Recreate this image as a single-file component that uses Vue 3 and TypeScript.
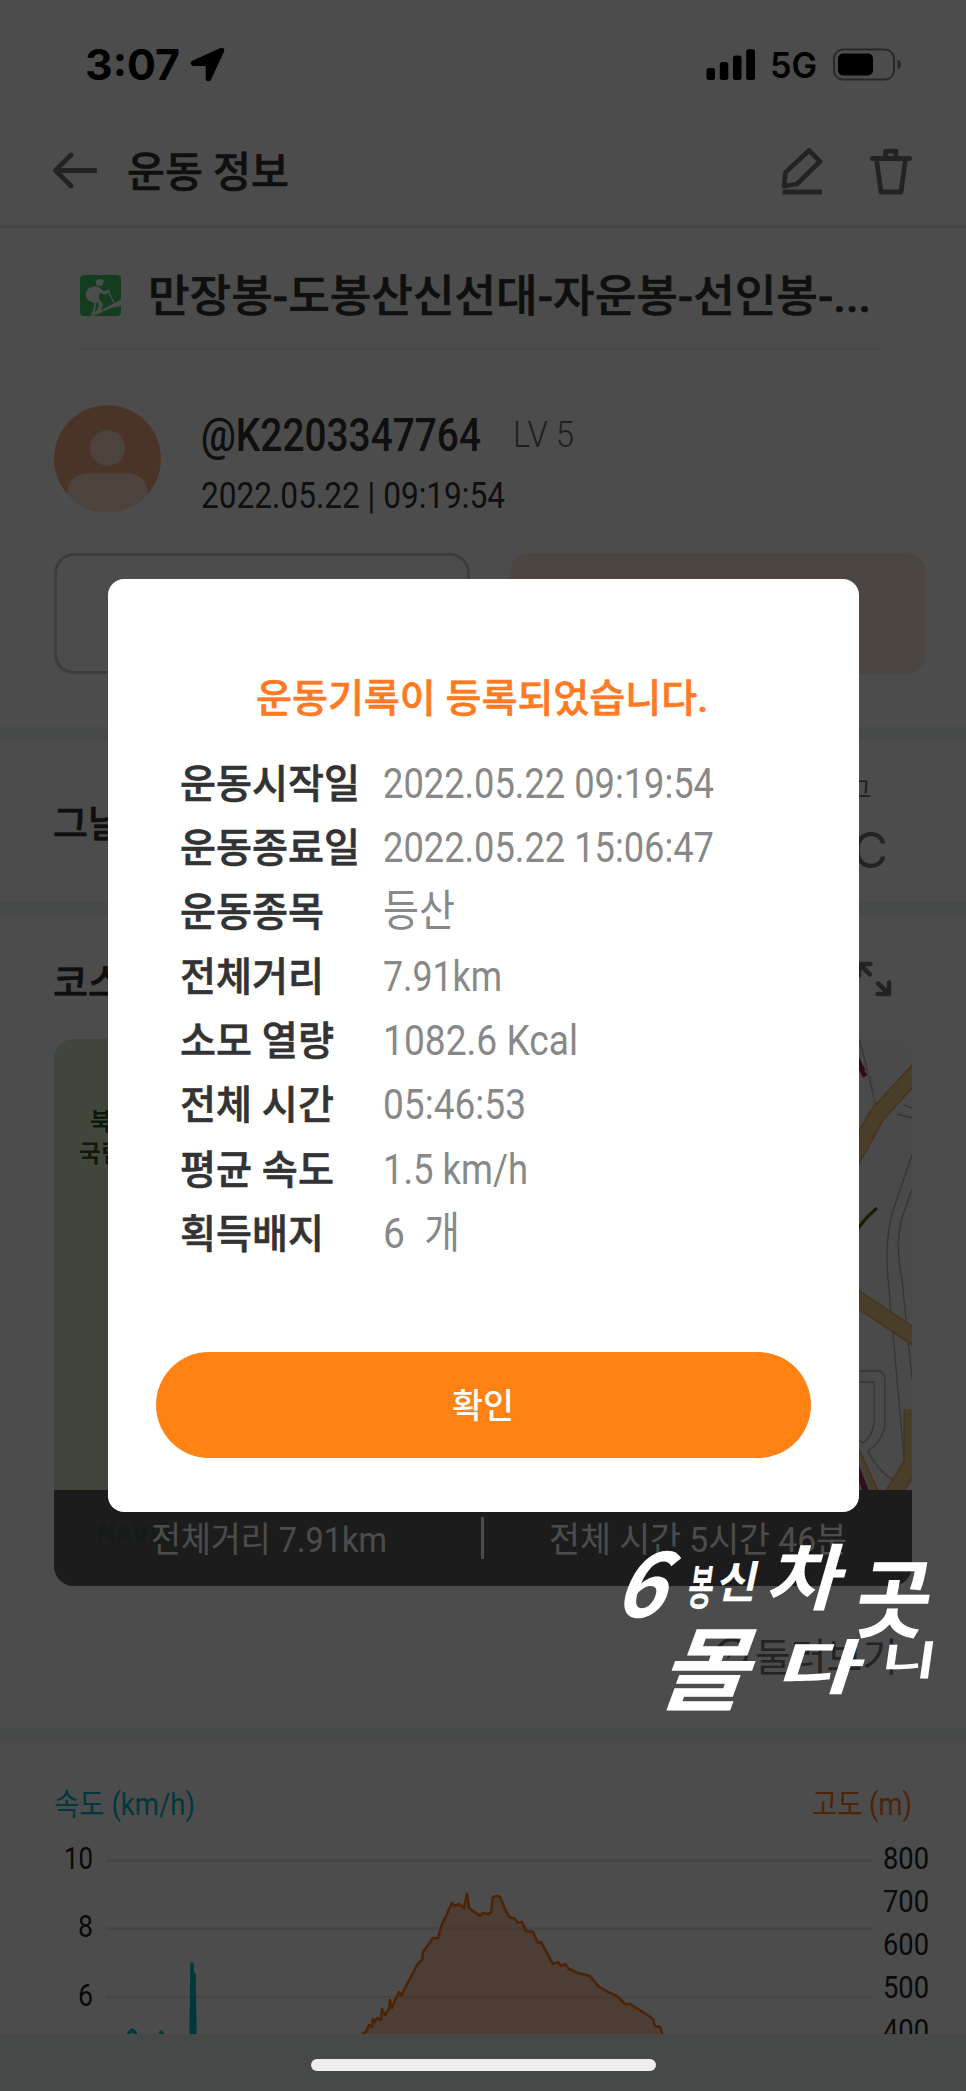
<script setup lang="ts">
interface Row {
  label: string
  labelWidth: number
  value: string
  valueWidth: number
}

interface Tick {
  value: number
  width: number
}

interface BrushGlyph {
  char: string
  transform: string
}

// Squeezes a run of text horizontally to the given width in pixels.
const vFit = {
  mounted(el: HTMLElement, binding: { value: number }) {
    const natural = el.getBoundingClientRect().width
    if (!natural) return
    el.style.transform = `scaleX(${binding.value / natural})`
    el.style.marginRight = `${binding.value - natural}px`
  },
}

const rows: Row[] = [
  { label: '운동시작일', labelWidth: 180, value: '2022.05.22 09:19:54', valueWidth: 331 },
  { label: '운동종료일', labelWidth: 180, value: '2022.05.22 15:06:47', valueWidth: 331 },
  { label: '운동종목', labelWidth: 144, value: '등산', valueWidth: 72 },
  { label: '전체거리', labelWidth: 144, value: '7.91km', valueWidth: 119 },
  { label: '소모 열량', labelWidth: 154, value: '1082.6 Kcal', valueWidth: 195 },
  { label: '전체 시간', labelWidth: 154, value: '05:46:53', valueWidth: 143 },
  { label: '평균 속도', labelWidth: 154, value: '1.5 km/h', valueWidth: 145 },
  { label: '획득배지', labelWidth: 144, value: '6\u00a0 개', valueWidth: 77 },
]

const speedTicks: Tick[] = [
  { value: 10, width: 29 },
  { value: 8, width: 15 },
  { value: 6, width: 15 },
]
const altitudeTicks = [800, 700, 600, 500, 400]

const brush: BrushGlyph[] = [
  { char: '6', transform: 'translate(6 97) skewX(-22) scale(.88 .94)' },
  { char: '봉', transform: 'translate(80 85) skewX(-8) scale(.29 .5)' },
  { char: '신', transform: 'translate(109 78) skewX(-12) scale(.46 .46)' },
  { char: '차', transform: 'translate(158 84) skewX(-16) scale(.84 .75)' },
  { char: '곳', transform: 'translate(245 111) skewX(-10) scale(.86 .9)' },
  { char: '몰', transform: 'translate(50 183) skewX(-20) scale(1 .95)' },
  { char: '다', transform: 'translate(168 169) skewX(-18) scale(.94 .62)' },
  { char: '니', transform: 'translate(274 155) skewX(-8) scale(.62 .42)' },
]
</script>

<template>
  <div class="phone">
    <div class="page">
      <div class="status">
        <div class="status-left">
          <span v-fit="95" class="time fit">3:07</span>
          <svg class="loc" width="38" height="38" viewBox="0 0 38 38">
            <path d="M32.5 4.500 4.500 17.200H19.500V32.500Z" fill="#000" stroke="#000" stroke-width="5.500" stroke-linejoin="round" />
          </svg>
        </div>
        <div class="status-right">
          <svg width="50" height="34" viewBox="0 0 50 34">
            <rect x="0.500" y="20" width="8.500" height="12" rx="2.500" />
            <rect x="13.800" y="14" width="8.500" height="18" rx="2.500" />
            <rect x="27" y="7.500" width="8.500" height="24.500" rx="2.500" />
            <rect x="40.200" y="1.200" width="8.800" height="30.800" rx="2.500" />
          </svg>
          <span v-fit="47" class="net fit">5G</span>
          <svg class="battery" width="70" height="34" viewBox="0 0 70 34">
            <rect x="1" y="1.500" width="60" height="30" rx="9" fill="none" stroke="#858585" stroke-width="2" />
            <rect x="5" y="5.500" width="35" height="22" rx="5" />
            <path d="M64.500 11.500q3.500 1.500 3.500 5t-3.500 5z" fill="#858585" />
          </svg>
        </div>
      </div>

      <header class="header">
        <svg width="48" height="40" viewBox="0 0 48 40" class="line-icon">
          <path d="M20 4 4.500 19.500 20 35M5 19.500H46" fill="none" stroke-width="5" stroke-linejoin="round" />
          <circle cx="20" cy="4" r="2.500" /><circle cx="20" cy="35" r="2.500" />
        </svg>
        <h1><span v-fit="162" class="fit">운동 정보</span></h1>
        <div class="tools">
          <svg width="44" height="50" viewBox="0 0 44 50" class="line-icon">
            <path d="M29 4.500 40 15.500 17 38 4 40 5.500 26.500ZM2.500 46H42" fill="none" stroke-width="4.800" stroke-linejoin="round" />
          </svg>
          <svg width="44" height="50" viewBox="0 0 44 50" class="line-icon">
            <path d="M3.500 12.500H40.500" stroke-width="5" stroke-linecap="round" />
            <path d="M7.500 13 12 46H32L36.500 13M16.500 12V5.200H27V12" fill="none" stroke-width="4.800" stroke-linejoin="round" />
          </svg>
        </div>
      </header>

      <div class="route">
        <svg width="41" height="41" viewBox="0 0 41 41">
          <rect width="41" height="41" rx="4" fill="#45c968" />
          <circle cx="19.500" cy="7.500" r="3.600" fill="#fff" />
          <path d="M20 4.500 24.500 5.500 23 7Z" fill="#fff" />
          <path d="M6 18Q7 13 12 12Q17 10.500 19 12.500L24 16.500 29 14.500 30.200 16.500 25 19.500 19.500 18 19 24 23 29 21 36 11 40 13 35 14.500 28 8.500 25.500Q5 22 6 18Z" fill="#fff" />
          <path d="M17 26 19 30 16.500 36 14.500 37 16 31Z" fill="#45c968" />
          <path d="M28 15.500 34 28" stroke="#fff" stroke-width="1.300" />
          <path d="M10.500 41 41 24.500V31Q28 33 19 38.500L13 41Z" fill="#fff" />
        </svg>
        <h2><span v-fit="723" class="fit">만장봉-도봉산신선대-자운봉-선인봉-...</span></h2>
      </div>

      <div class="profile">
        <svg width="108" height="108" viewBox="0 0 108 108">
          <defs><clipPath id="face"><circle cx="53.500" cy="53.700" r="53.500" /></clipPath></defs>
          <g clip-path="url(#face)">
            <rect width="108" height="108" fill="#f9b088" />
            <circle cx="53.500" cy="43" r="17.600" fill="#fde0c9" />
            <rect x="13" y="68.500" width="81" height="60" rx="20" fill="#fde0c9" />
          </g>
        </svg>
        <div class="who">
          <div class="name-line">
            <span v-fit="280" class="name fit">@K2203347764</span>
            <span v-fit="61" class="level fit">LV 5</span>
          </div>
          <span v-fit="304" class="date fit">2022.05.22 | 09:19:54</span>
        </div>
      </div>

      <div class="actions">
        <div class="action outline"></div>
        <div class="action tint"></div>
      </div>

      <div class="band"></div>

      <section class="weather">
        <h3>그날의 날씨</h3>
        <div class="temp">
          <span class="temp-label">그</span>
          <span class="temp-value">°C</span>
        </div>
      </section>

      <div class="band"></div>

      <section class="course">
        <h3>코스</h3>
        <svg width="40" height="40" viewBox="0 0 40 40">
          <path d="M17.500 6H6V17.500M6.500 6.500 17 16.500M36 24.500V36H24.500M35.500 35.500 25 25.500" fill="none" stroke="#777" stroke-width="4.500" stroke-linecap="round" stroke-linejoin="round" />
        </svg>
      </section>

      <div class="map">
        <svg class="map-art" width="858" height="547" viewBox="0 0 858 547">
          <rect width="858" height="547" fill="#f7f7f7" />
          <path d="M0 0H420V547H0Z" fill="#d8e9c8" />
          <g fill="none" stroke="#b0b0b0" stroke-width="1.300">
            <path d="M805 0 811 22 823 72M850 66 858 69M843 75 858 79" />
            <path d="M858 116 838 175Q830 205 835 250L847 385 851 430V442H840Q822 430 814 412 826 405 831 388V340Q830 332 823 332H800" />
            <path d="M858 150 847 182Q841 210 848 240L858 340M800 343H820V385Q817 399 809 404L800 398" />
          </g>
          <path d="M803 192Q807 183 823 169" fill="none" stroke="#456600" stroke-width="3" />
          <path d="M800 14Q807 30 812 37M816 76Q817 90 803 106" fill="none" stroke="#9b2850" stroke-width="6" />
          <path d="M811 31Q824 45 818 78Q815 92 803 111" fill="none" stroke="#e0e0e0" stroke-width="2" />
          <g fill="none" stroke="#f4a060" stroke-width="17" stroke-linejoin="round">
            <path d="M790 136 823 76 875 19M790 251 875 308M858 370V424L825 478M790 397 826 474 815 490" />
          </g>
          <g fill="none" stroke="#f5cf88" stroke-width="14.500" stroke-linejoin="round">
            <path d="M790 136 823 76 875 19M790 251 875 308M858 370V424L825 478M790 397 826 474 815 490" />
          </g>
          <path d="M798 417 815 460 808 547" fill="none" stroke="#ddd" stroke-width="12" />
          <path d="M798 417 815 460 808 547" fill="none" stroke="#b03060" stroke-width="6" />
        </svg>
        <div class="park">북한산<br />국립공원</div>
        <div class="summary">
          <span class="naver">NAVER</span>
          <div class="sum-cell first"><span v-fit="236" class="fit">전체거리 7.91km</span></div>
          <i></i>
          <div class="sum-cell"><span v-fit="298" class="fit">전체 시간 5시간 46분</span></div>
        </div>
      </div>

      <div class="look">
        <svg width="34" height="34" viewBox="0 0 34 34">
          <circle cx="17" cy="17" r="14.500" fill="none" stroke="#777" stroke-width="3.500" />
          <path d="m21 11-5 8-5 4 5-9z" fill="#777" />
        </svg>
        <span v-fit="143" class="fit">둘러보기</span>
      </div>

      <div class="band"></div>

      <section class="chart">
        <div class="legend">
          <span v-fit="141" class="speed fit">속도 (km/h)</span>
          <div class="alt-box"><span v-fit="100" class="alt fit">고도 (m)</span></div>
        </div>
        <div class="plot">
          <div class="ticks speed-ticks">
            <span v-for="t in speedTicks" :key="t.value"><b v-fit="t.width" class="fit">{{ t.value }}</b></span>
          </div>
          <svg width="766" height="200" viewBox="0 0 766 200">
            <path d="M0 26.500H766M0 94.500H766M0 163H766" stroke="#e6e6e6" stroke-width="2.500" />
            <path d="M256 200 260 198 263 191 266 193 267 185 269 188 271 184 275 186 276 175 279 181 283 175 284 166 286 174 288 168 293 158 295 162 299 154 307 139 311 131 316 126 317 118 327 104 332 104 336 90 346 69 349 70 353 70 358 72 361 57 363 74 370 79 374 80 377 79 383 80 385 78 387 63 391 62 394 63 399 75 403 83 409 87 412 91 416 91 420 97 427 100 432 109 435 108 440 117 447 130 452 130 455 132 459 130 463 135 472 139 484 142 492 152 502 158 511 162 519 170 524 170 537 178 547 185 549 192 554 193 557 202H256Z" fill="#ff7a22" fill-opacity=".36" />
            <path d="M256 200 260 198 263 191 266 193 267 185 269 188 271 184 275 186 276 175 279 181 283 175 284 166 286 174 288 168 293 158 295 162 299 154 307 139 311 131 316 126 317 118 327 104 332 104 336 90 341 80 346 69 349 72 353 70 358 74 361 60 363 74 370 79 374 82 377 79 383 80 385 78 387 63 391 62 394 63 399 75 403 83 409 85 412 89 416 88 420 97 427 98 432 109 435 108 440 117 447 130 452 128 455 132 459 130 463 135 472 139 484 142 492 152 502 158 511 162 519 170 524 170 537 178 547 185 549 192 554 193 557 202" fill="none" stroke="#ff7518" stroke-width="2.600" stroke-linejoin="round" />
            <path d="M22 200 26 196 29 198 30 202M54 200 55 198 57 201M85 202 86 130 88 202 88 140 89 202" fill="none" stroke="#00bdc4" stroke-width="3.400" stroke-linejoin="round" />
          </svg>
          <div class="ticks alt-ticks">
            <span v-for="t in altitudeTicks" :key="t"><b v-fit="46" class="fit">{{ t }}</b></span>
          </div>
        </div>
      </section>

      <footer class="footer"></footer>
    </div>

    <div class="dim">
      <div class="modal">
        <p class="modal-title"><span v-fit="452" class="fit">운동기록이 등록되었습니다.</span></p>
        <dl>
          <div v-for="row in rows" :key="row.label" class="row">
            <dt><span v-fit="row.labelWidth" class="fit">{{ row.label }}</span></dt>
            <dd><span v-fit="row.valueWidth" class="fit">{{ row.value }}</span></dd>
          </div>
        </dl>
        <button type="button"><span v-fit="62" class="fit">확인</span></button>
      </div>
    </div>

    <svg class="handwriting" width="340" height="200" viewBox="0 0 340 200">
      <text v-for="g in brush" :key="g.char" :transform="g.transform">{{ g.char }}</text>
    </svg>
    <div class="home"></div>
  </div>
</template>

<style>
body {
  margin: 0;
  background: #4c4c4c;
}
</style>

<style scoped>
.phone {
  position: relative;
  width: 966px;
  height: 2091px;
  overflow: hidden;
  font-family: Roboto, 'Noto Sans CJK KR', sans-serif;
}
h1,
h2,
h3,
p,
dl,
dd {
  margin: 0;
}
svg {
  flex: none;
}
.fit {
  display: inline-block;
  white-space: pre;
  transform-origin: 0 50%;
}
.page {
  display: flex;
  flex-direction: column;
  height: 2091px;
  background: #fff;
  color: #333;
}
.status {
  box-sizing: border-box;
  display: flex;
  justify-content: space-between;
  height: 110px;
  padding: 45px 63px 0 85px;
  font-family: Inter, sans-serif;
  color: #000;
}
.status-left,
.status-right {
  display: flex;
  align-items: center;
  height: 40px;
}
.time {
  font-size: 42px;
  font-weight: 700;
  line-height: 40px;
}
.loc {
  margin-left: 9px;
}
.net {
  margin-left: 14px;
  font-size: 35px;
  font-weight: 600;
  line-height: 40px;
}
.battery {
  margin-left: 16px;
}
.header {
  box-sizing: border-box;
  display: flex;
  align-items: center;
  height: 118px;
  padding: 7px 53px 0 51px;
  border-bottom: 3px solid #e6e6e6;
}
.line-icon {
  stroke: #777;
  color: #777;
}
.line-icon circle {
  fill: #777;
  stroke: none;
}
.header h1 {
  margin-left: 28px;
  padding-top: 3px;
  font-size: 42px;
  font-weight: 500;
  line-height: 60px;
}
h1,
h2,
h3,
dt,
.modal-title {
  -webkit-text-stroke: 0.6px currentColor;
}
.tools {
  display: flex;
  gap: 45px;
  margin-left: auto;
}
.route {
  box-sizing: border-box;
  display: flex;
  align-items: center;
  height: 122px;
  margin: 0 81px 0 80px;
  padding-top: 14px;
  border-bottom: 2px solid #eff5f4;
}
.route h2 {
  width: 724px;
  margin-left: 27px;
  padding-top: 4px;
  font-size: 44px;
  font-weight: 500;
  line-height: 60px;
}
.profile {
  display: flex;
  height: 148px;
  padding: 55px 0 0 54px;
}
.who {
  margin-left: 39px;
  padding-top: 1px;
}
.name-line {
  display: flex;
  align-items: center;
  height: 58px;
}
.name {
  font-size: 46px;
  font-weight: 500;
  line-height: 58px;
}
.level {
  margin-left: 32px;
  font-size: 37px;
  font-weight: 300;
  color: #6a6a6a;
  line-height: 64px;
}
.date {
  font-size: 37px;
  line-height: 63px;
}
.actions {
  display: flex;
  gap: 40px;
  height: 121px;
  margin: 0 40px 53px 54px;
}
.action {
  box-sizing: border-box;
  width: 416px;
  border-radius: 20px;
}
.outline {
  border: 3px solid #ccc;
}
.tint {
  background: #ffe9dc;
}
.band {
  flex: none;
  height: 13px;
  background: #edf5f2;
}
.weather,
.course {
  box-sizing: border-box;
  display: flex;
  justify-content: space-between;
  padding: 0 78px 0 53px;
}
h3 {
  font-size: 38px;
  font-weight: 500;
}
.weather {
  height: 162px;
}
.weather h3 {
  line-height: 168px;
}
.temp {
  display: flex;
  flex-direction: column;
  align-items: flex-end;
  padding-top: 31px;
}
.temp-label {
  padding-right: 17px;
  font-size: 24px;
  line-height: 38px;
  color: #666;
}
.temp-value {
  font-family: Inter, sans-serif;
  font-size: 49px;
  line-height: 84px;
  color: #777;
}
.course {
  height: 124px;
  padding-right: 73px;
}
.course h3 {
  line-height: 136px;
}
.course svg {
  margin-top: 43px;
}
.map {
  position: relative;
  display: flex;
  flex: none;
  align-items: flex-end;
  height: 547px;
  margin: 0 54px;
  overflow: hidden;
  border-radius: 20px;
}
.map-art {
  position: absolute;
  inset: 0;
}
.park {
  position: absolute;
  top: 67px;
  left: 14px;
  width: 110px;
  font-size: 24px;
  font-weight: 700;
  line-height: 32px;
  text-align: center;
  color: #2d5a14;
  text-shadow: 0 0 3px #fff;
}
.summary {
  position: relative;
  display: flex;
  align-items: center;
  width: 100%;
  height: 96px;
  background: #5e5e5e;
  font-size: 35px;
  line-height: 36px;
  color: #fff;
}
.summary i {
  width: 3px;
  height: 42px;
  background: #fff;
}
.sum-cell {
  padding: 5px 0 0 65px;
}
.sum-cell.first {
  box-sizing: border-box;
  width: 427px;
  padding-left: 97px;
}
.naver {
  position: absolute;
  left: 43px;
  top: 25px;
  font-weight: 900;
  font-size: 26px;
  color: #4c5a54;
}
.look {
  box-sizing: border-box;
  display: flex;
  align-items: center;
  gap: 6px;
  height: 142px;
  padding: 0 0 6px 715px;
  font-size: 39px;
  color: #777;
}
.chart {
  height: 293px;
  overflow: hidden;
}
.legend {
  display: flex;
  justify-content: space-between;
  height: 93px;
  padding: 0 54px;
  font-size: 31px;
  line-height: 128px;
}
.speed {
  color: #00bdc4;
}
.alt {
  color: #ff7518;
}
.plot {
  display: flex;
  height: 200px;
  font-size: 32px;
  color: #222;
}
.ticks span {
  display: block;
}
.ticks b {
  font-weight: 400;
}
.speed-ticks {
  width: 93px;
  margin-right: 13px;
  text-align: right;
}
.speed-ticks span {
  height: 68.300px;
  line-height: 48px;
}
.alt-ticks {
  margin-left: 11px;
}
.alt-ticks span {
  height: 42.900px;
  line-height: 48px;
}
.footer {
  flex: 1;
  background: #edf5f2;
}
.dim {
  position: absolute;
  inset: 0;
  background: rgba(0, 0, 0, 0.7);
}
.modal {
  box-sizing: border-box;
  display: flex;
  flex-direction: column;
  width: 751.500px;
  height: 933.500px;
  margin: 578.500px 0 0 107.500px;
  padding: 84px 48.500px 54px;
  border-radius: 16px;
  background: #fff;
}
.modal-title {
  padding-left: 100px;
  font-size: 39px;
  font-weight: 500;
  line-height: 72px;
  color: #ff7a22;
}
dl {
  padding: 16px 0 0 24px;
}
.row {
  display: flex;
  height: 64.400px;
  line-height: 64.400px;
}
dt {
  box-sizing: border-box;
  width: 203px;
  padding-top: 2px;
  font-size: 40px;
  font-weight: 500;
  color: #333;
}
dd {
  font-size: 43px;
  font-weight: 400;
  color: #888;
}
button {
  height: 106px;
  margin-top: auto;
  padding: 3px 0 0;
  border: 0;
  border-radius: 53px;
  background: #ff8213;
  font: 500 34px/103px Roboto, 'Noto Sans CJK KR', sans-serif;
  color: #fff;
}
.handwriting {
  position: absolute;
  left: 606px;
  top: 1520px;
  overflow: visible;
  fill: #fff;
  font-family: 'Noto Sans CJK KR', sans-serif;
  font-size: 96px;
  font-weight: 700;
}
.home {
  position: absolute;
  left: 311px;
  top: 2059px;
  width: 345px;
  height: 12px;
  border-radius: 6px;
  background: #eee;
}
</style>
